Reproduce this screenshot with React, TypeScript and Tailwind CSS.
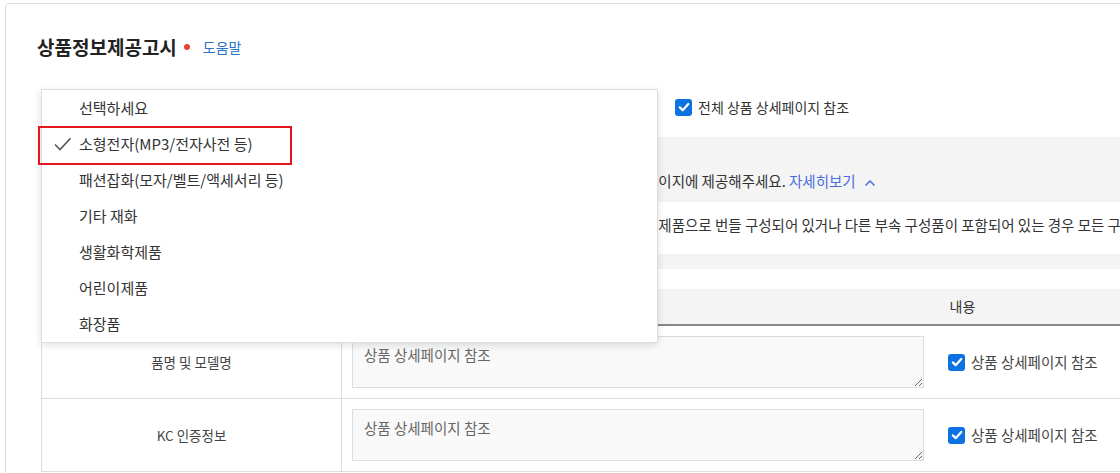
import React from 'react';

function Check() {
  return (
    <span className="inline-flex h-[17px] w-[17px] shrink-0 items-center justify-center rounded-[3px] bg-[#0c72e2]">
      <svg viewBox="0 0 16 16" className="h-[14px] w-[14px]">
        <path d="M3.2 8.4 L6.5 11.6 L12.9 4.6" fill="none" stroke="#fff" strokeWidth="2.5" strokeLinecap="round" strokeLinejoin="round" />
      </svg>
    </span>
  );
}

const items = [
  '선택하세요',
  '소형전자(MP3/전자사전 등)',
  '패션잡화(모자/벨트/액세서리 등)',
  '기타 재화',
  '생활화학제품',
  '어린이제품',
  '화장품',
];

const rows = ['품명 및 모델명', 'KC 인증정보'];

export default function App() {
  return (
    <div className="relative h-[473px] w-[1120px] overflow-hidden bg-white font-['Noto_Sans_CJK_KR','Noto_Sans',sans-serif] text-[#333]">
      <div className="ml-[5px] mt-[3px] w-[1700px] rounded-[4px] border border-[#dddddd] pb-10 pl-[31px] pt-[31px]">
        <div className="flex h-[24px] items-center">
          <h2 className="text-[19px] font-bold leading-[24px] text-[#222]">상품정보제공고시</h2>
          <span className="ml-[7px] h-[6px] w-[6px] rounded-full bg-[#ea4335]" />
          <a className="ml-[13px] text-[14px] leading-[24px] text-[#2a72c8]">도움말</a>
        </div>
        <div className="pl-[4px]">
          <div className="mt-[30px] flex h-[36px] items-center">
            <div className="h-[36px] w-[617px] border border-[#cccccc] bg-white" />
            <label className="ml-[17px] flex items-center gap-[6px] text-[14px] leading-[20px] text-[#333]">
              <Check />
              전체 상품 상세페이지 참조
            </label>
          </div>

          <div className="mt-[12px] w-[1542px] bg-[#f4f4f4] px-[20px] pb-[15px] pt-[11px] text-[14.5px] leading-[22px] text-[#333]">
            <p className="whitespace-nowrap">상품정보제공고시 안내</p>
            <p className="whitespace-nowrap pl-[24px]">
              상품정보제공고시는 법령에 따라 정확하게 입력해야 하며, 입력한 정보와 다른 내용은 상품 상세페이지에 제공해주세요.{' '}
              <span className="text-[#4a6cdc]">자세히보기</span>
              <svg viewBox="0 0 12 8" className="ml-[8px] inline-block h-[8px] w-[12px] align-middle">
                <path d="M1.5 6.5 L6 2 L10.5 6.5" fill="none" stroke="#4a6cdc" strokeWidth="1.5" />
              </svg>
            </p>
            <div className="mt-[10px] bg-white pb-[18px] pl-[26px] pr-[16px] pt-[12px]">
              <p className="whitespace-nowrap">
                ※ 구성 상품 정보 입력 안내 : 하나의 판매 상품이 사은품, 증정품 등을 함께 포함하거나 여러 개의 제품으로 번들 구성되어 있거나 다른 부속 구성품이 포함되어 있는 경우 모든 구성품에 대한 정보를 각각 입력해주세요.
              </p>
            </div>
          </div>

          <div className="mt-[20px] w-[1542px] text-[14px] text-[#444]">
            <div className="flex h-[37px] border-b-2 border-[#888888] bg-[#f4f4f4]">
              <div className="flex w-[301px] items-center justify-center">항목</div>
              <div className="flex flex-1 items-center justify-center text-[#333]">내용</div>
            </div>
            {rows.map((r) => (
              <div key={r} className="flex border-b border-l border-[#dddddd]">
                <div className="flex w-[300px] items-center justify-center border-r border-[#dddddd] text-[13.5px] text-[#444]">
                  {r}
                </div>
                <div className="flex flex-1 items-center py-[10px] pl-[10px]">
                  <textarea
                    readOnly
                    value="상품 상세페이지 참조"
                    className="h-[52px] w-[572px] border border-[#dddddd] bg-[#f9f9f9] px-[11px] py-[8px] text-[14.5px] leading-[20px] text-[#666] outline-none"
                  />
                  <label className="ml-[24px] flex items-center gap-[6px] text-[14.5px] leading-[20px] text-[#444]">
                    <Check />
                    상품 상세페이지 참조
                  </label>
                </div>
              </div>
            ))}
          </div>
        </div>
      </div>

      <ul className="absolute left-[41px] top-[89px] w-[617px] border border-[#dddddd] bg-white py-0 shadow-[0_2px_8px_rgba(0,0,0,0.13)]">
        {items.map((it, i) => (
          <li key={it} className="relative flex h-[36px] items-center pl-[37px] text-[15px] text-[#333]">
            {i === 1 && (
              <svg viewBox="0 0 18 14" className="absolute left-[12px] top-1/2 h-[14px] w-[18px] -translate-y-1/2">
                <path d="M1 7.5 L6 12.5 L16.5 1.2" fill="none" stroke="#555" strokeWidth="1.6" />
              </svg>
            )}
            {it}
          </li>
        ))}
      </ul>

      <div className="absolute left-[38px] top-[126px] h-[39px] w-[254px] border-2 border-[#e3161f]" />
    </div>
  );
}
